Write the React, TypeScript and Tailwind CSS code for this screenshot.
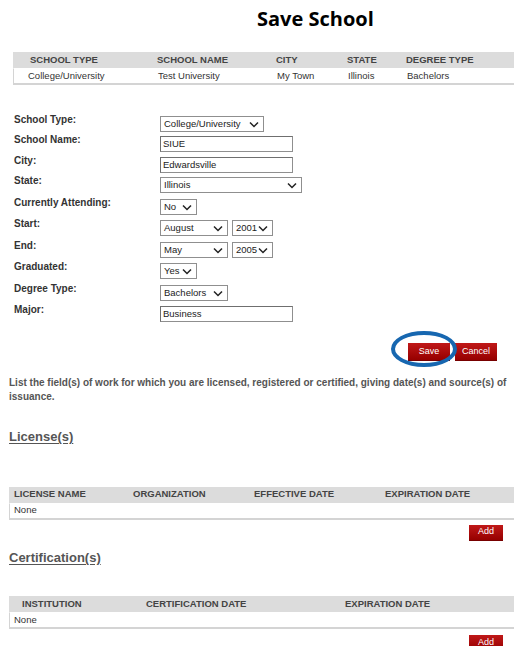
import React from "react";

const Chevron = () => (
  <svg width="10" height="7" viewBox="0 0 10 7" className="shrink-0">
    <polyline points="1,1.5 5,5.5 9,1.5" fill="none" stroke="#222" strokeWidth="1.5" />
  </svg>
);

function Select({ value, w }: { value: string; w: string }) {
  return (
    <div className={`${w} h-[16px] border border-[#8f8f8f] bg-white flex items-center justify-between pl-[3px] pr-[4px] text-[9.5px] text-[#222]`}>
      <span className="pt-[1px]">{value}</span>
      <Chevron />
    </div>
  );
}

function Input({ value }: { value: string }) {
  return (
    <div className="w-[133px] h-[16px] border border-[#8f8f8f] border-t-[#6f6f6f] border-l-[#6f6f6f] bg-white flex items-center pl-[2px] text-[9.5px] text-[#222]">
      {value}
    </div>
  );
}

function Btn({ label, w, h }: { label: string; w: string; h: string }) {
  return (
    <div className={`${w} ${h} bg-gradient-to-b from-[#c01818] to-[#960000] border-b border-[#700] text-white text-[9px] flex items-center justify-center`}>
      {label}
    </div>
  );
}

const rows: { label: string; h: string; control: React.ReactNode }[] = [
  { label: "School Type:", h: "h-[20px]", control: <Select value="College/University" w="w-[104px]" /> },
  { label: "School Name:", h: "h-[21px]", control: <Input value="SIUE" /> },
  { label: "City:", h: "h-[20px]", control: <Input value="Edwardsville" /> },
  { label: "State:", h: "h-[22px]", control: <Select value="Illinois" w="w-[142px]" /> },
  { label: "Currently Attending:", h: "h-[21px]", control: <Select value="No" w="w-[37px]" /> },
  {
    label: "Start:",
    h: "h-[22px]",
    control: (
      <div className="flex gap-[4px]">
        <Select value="August" w="w-[68px]" />
        <Select value="2001" w="w-[41px]" />
      </div>
    ),
  },
  {
    label: "End:",
    h: "h-[21px]",
    control: (
      <div className="flex gap-[4px]">
        <Select value="May" w="w-[68px]" />
        <Select value="2005" w="w-[41px]" />
      </div>
    ),
  },
  { label: "Graduated:", h: "h-[22px]", control: <Select value="Yes" w="w-[37px]" /> },
  { label: "Degree Type:", h: "h-[21px]", control: <Select value="Bachelors" w="w-[68px]" /> },
  { label: "Major:", h: "h-[16px]", control: <Input value="Business" /> },
];

export default function App() {
  return (
    <div className="w-[514px] h-[646px] overflow-hidden bg-white font-['Liberation_Sans',Arial,sans-serif] text-[#333]">
      {/* page title */}
      <div className="pt-[6px] pl-[257px] h-[52px] font-['Open_Sans',sans-serif] font-bold text-[20px] leading-[26px] text-black">
        Save School
      </div>

      {/* saved schools */}
      <div className="ml-[13px]">
        <div className="h-[16px] bg-[#dcdcdc] grid grid-cols-[144px_119px_71px_59px_1fr] items-center text-[9.5px] font-bold text-[#444]">
          <span className="pl-[17px]">SCHOOL TYPE</span>
          <span>SCHOOL NAME</span>
          <span>CITY</span>
          <span>STATE</span>
          <span>DEGREE TYPE</span>
        </div>
        <div className="h-[17px] border-l border-b-2 border-[#d4d4d4] border-t border-t-white grid grid-cols-[144px_119px_71px_59px_1fr] items-center text-[9.5px] text-[#333]">
          <span className="pl-[14px]">College/University</span>
          <span>Test University</span>
          <span>My Town</span>
          <span>Illinois</span>
          <span>Bachelors</span>
        </div>
      </div>

      {/* school form */}
      <div className="mt-[31px] pl-[14px] flex flex-col">
        {rows.map((r) => (
          <div key={r.label} className={`${r.h} flex items-start`}>
            <div className="w-[146px] -mt-[2px] text-[10px] font-bold text-[#333] leading-[12px]">{r.label}</div>
            {r.control}
          </div>
        ))}
      </div>

      {/* form actions */}
      <div className="mt-[21px] flex justify-end gap-[5px] pr-[17px]">
        <div className="relative">
          <Btn label="Save" w="w-[42px]" h="h-[18px]" />
          <div className="absolute left-[-17px] top-[-12px] w-[66px] h-[36px] rounded-[50%] border-[4px] border-[#1767b0]" />
        </div>
        <Btn label="Cancel" w="w-[42px]" h="h-[18px]" />
      </div>

      <p className="mt-[15px] ml-[9px] mr-[6px] text-[10px] font-bold text-[#555] leading-[14px]">
        List the field(s) of work for which you are licensed, registered or certified, giving date(s) and source(s) of issuance.
      </p>

      <div className="mt-[23px] ml-[9px] text-[13px] font-bold text-[#555] underline underline-offset-2">License(s)</div>

      {/* licenses */}
      <div className="mt-[40px] ml-[9px]">
        <div className="h-[16px] bg-[#dcdcdc] grid grid-cols-[124px_121px_131px_1fr] items-center text-[9.5px] font-bold text-[#444]">
          <span className="pl-[5px]">LICENSE NAME</span>
          <span>ORGANIZATION</span>
          <span>EFFECTIVE DATE</span>
          <span>EXPIRATION DATE</span>
        </div>
        <div className="h-[17px] border-l border-b-2 border-[#d4d4d4] border-t border-t-white flex items-center pl-[4px] text-[9.5px] text-[#333]">
          None
        </div>
      </div>
      <div className="mt-[5px] flex justify-end pr-[11px]">
        <Btn label="Add" w="w-[34px]" h="h-[16px]" />
      </div>

      <div className="mt-[7px] ml-[9px] text-[13px] font-bold text-[#555] underline underline-offset-2">Certification(s)</div>

      {/* certifications */}
      <div className="mt-[29px] ml-[9px]">
        <div className="h-[16px] bg-[#dcdcdc] grid grid-cols-[137px_199px_1fr] items-center text-[9.5px] font-bold text-[#444]">
          <span className="pl-[13px]">INSTITUTION</span>
          <span>CERTIFICATION DATE</span>
          <span>EXPIRATION DATE</span>
        </div>
        <div className="h-[17px] border-l border-b-2 border-[#d4d4d4] border-t border-t-white flex items-center pl-[4px] text-[9.5px] text-[#333]">
          None
        </div>
      </div>
      <div className="mt-[6px] flex justify-end pr-[11px]">
        <Btn label="Add" w="w-[34px]" h="h-[16px]" />
      </div>
    </div>
  );
}
